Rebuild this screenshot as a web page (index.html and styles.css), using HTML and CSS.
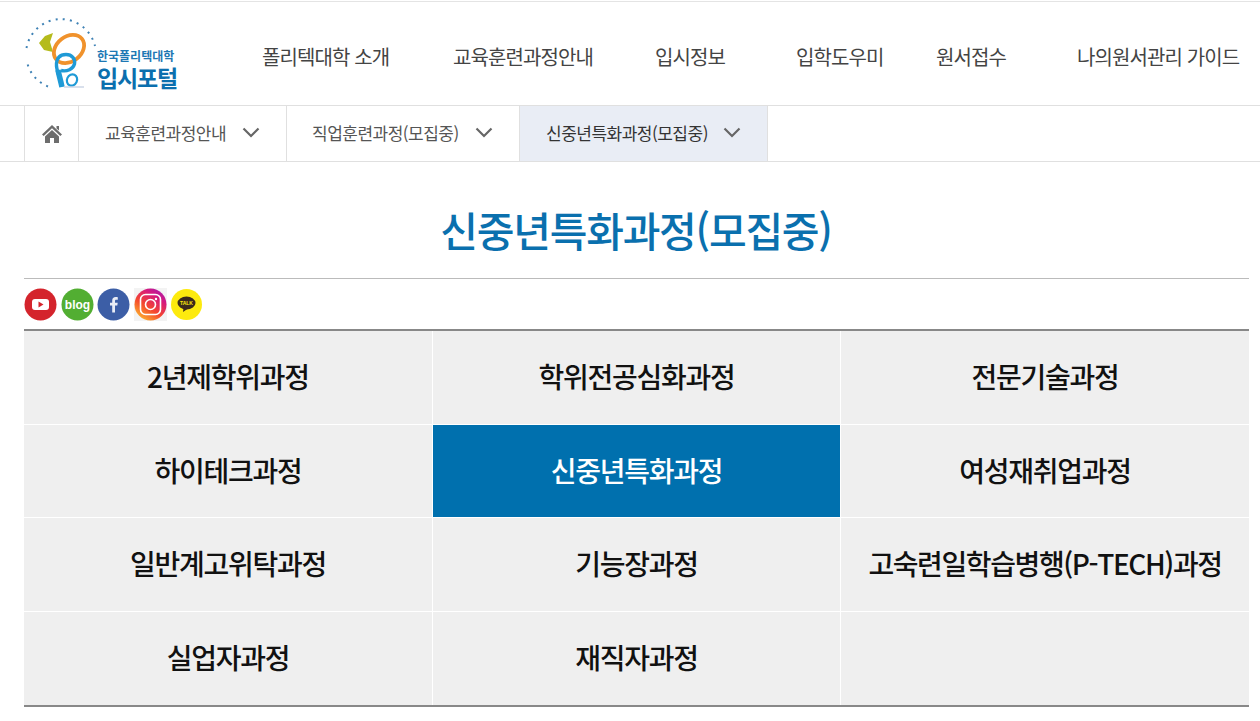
FILE: index.html
```html
<!DOCTYPE html>
<html lang="ko">
<head>
<meta charset="utf-8">
<title>신중년특화과정(모집중)</title>
<link rel="stylesheet" href="styles.css">
</head>
<body>
<header class="header">
  <a class="logo" href="#">
    <svg class="logo-mark" width="78" height="80" viewBox="24 12 78 80" aria-hidden="true">
      <g fill="none" stroke="#3f82b5" stroke-width="2" stroke-dasharray="2 5.200">
        <path d="M48 86.500A35 35 0 0 1 27 62"/>
        <path d="M26.500 48A35 35 0 0 1 95 46"/>
      </g>
      <path d="M53 33L45 36L39 43L44 50L53 52L50 42Z" fill="#b5bb1c"/>
      <ellipse cx="69" cy="49" rx="16.500" ry="12.500" transform="rotate(-38 69 49)" fill="none" stroke="#f0922c" stroke-width="3.800"/>
      <path d="M62 86C60 78 57 72 56.500 66C56 58 60 54.500 66 54.500C72 54.500 75.500 59 74.500 64C73 69 67 72 61 70.500" fill="none" stroke="#1f9ad6" stroke-width="3.400"/>
      <path d="M62 87C60.500 80 59 75 58 70" fill="none" stroke="#1f9ad6" stroke-width="5.500"/>
      <ellipse cx="72" cy="80" rx="5" ry="5.800" transform="rotate(25 72 80)" fill="none" stroke="#1f9ad6" stroke-width="2.200"/>
      <path d="M64 87H84" stroke="#c9d3e4" stroke-width="1.400"/>
    </svg>
    <span class="logo-text">
      <span class="logo-small">한국폴리텍대학</span>
      <span class="logo-big">입시포털</span>
    </span>
  </a>
  <nav class="gnb">
    <a href="#">폴리텍대학 소개</a>
    <a href="#">교육훈련과정안내</a>
    <a href="#">입시정보</a>
    <a href="#">입학도우미</a>
    <a href="#">원서접수</a>
    <a href="#">나의원서관리 가이드</a>
  </nav>
</header>

<div class="crumbs">
  <a class="crumb crumb-home" href="#" aria-label="홈">
    <svg width="22" height="20" viewBox="0 0 22 20" aria-hidden="true">
      <path d="M11 1 L21 10.500 L19.300 12 L11 4.300 L2.700 12 L1 10.500Z" fill="#6d6d6d"/>
      <path d="M15.500 2H18V6.500L15.500 4.500Z" fill="#6d6d6d"/>
      <path d="M11 6 L18 12.500V19H13V14H9V19H4V12.500Z" fill="#6d6d6d"/>
    </svg>
  </a>
  <a class="crumb crumb-first" href="#">교육훈련과정안내
    <svg class="chev" width="18" height="11" viewBox="0 0 18 11" aria-hidden="true"><path d="M1.500 1.500 L9 9 L16.500 1.500"/></svg>
  </a>
  <a class="crumb crumb-second" href="#">직업훈련과정(모집중)
    <svg class="chev" width="18" height="11" viewBox="0 0 18 11" aria-hidden="true"><path d="M1.500 1.500 L9 9 L16.500 1.500"/></svg>
  </a>
  <a class="crumb crumb-current" href="#">신중년특화과정(모집중)
    <svg class="chev" width="18" height="11" viewBox="0 0 18 11" aria-hidden="true"><path d="M1.500 1.500 L9 9 L16.500 1.500"/></svg>
  </a>
</div>

<main class="content">
  <h1 class="title">신중년특화과정(모집중)</h1>
  <div class="sns">
    <svg viewBox="0 0 33 33" aria-label="youtube"><circle cx="16.500" cy="16.500" r="16" fill="#d4242c"/><rect x="8" y="11" width="17" height="11" rx="3" fill="#fff"/><path d="M14.500 13.500 L19.500 16.500 L14.500 19.500Z" fill="#d4242c"/></svg>
    <svg viewBox="0 0 33 33" aria-label="blog"><circle cx="16.500" cy="16.500" r="16" fill="#52ae32"/><text x="16.500" y="20.500" class="blog-text">blog</text></svg>
    <svg viewBox="0 0 33 33" aria-label="facebook"><circle cx="16.500" cy="16.500" r="16" fill="#3c5ea6"/><path d="M18 24.500V17.500H20.300L20.700 14.800H18V13.100C18 12.200 18.400 11.800 19.300 11.800H20.800V9.300C20.300 9.200 19.500 9.100 18.700 9.100C16.500 9.100 15.200 10.400 15.200 12.700V14.800H13V17.500H15.200V24.500Z" fill="#e9edf6"/></svg>
    <svg viewBox="0 0 33 33" aria-label="instagram">
      <defs><linearGradient id="ig" x1="0.150" y1="1" x2="0.850" y2="0"><stop offset="0" stop-color="#fdc02f"/><stop offset="0.400" stop-color="#f5492c"/><stop offset="0.750" stop-color="#d5197f"/><stop offset="1" stop-color="#a51cb0"/></linearGradient></defs>
      <rect width="33" height="33" fill="#f3f3f3"/>
      <circle cx="16.500" cy="16.500" r="16" fill="url(#ig)"/>
      <rect x="6.500" y="6.500" width="20" height="20" rx="5" fill="none" stroke="#fff" stroke-width="1.600"/>
      <circle cx="16.500" cy="16.500" r="5" fill="none" stroke="#fff" stroke-width="1.600"/>
      <circle cx="22" cy="11" r="1.200" fill="#fff"/>
    </svg>
    <svg viewBox="0 0 33 33" aria-label="kakao talk"><circle cx="16.500" cy="16.500" r="15.500" fill="#fdea0e"/><ellipse cx="16.500" cy="15" rx="9" ry="6.500" fill="#3b2a1c"/><path d="M13.500 19.500 L13 24 L18 20.500Z" fill="#3b2a1c"/><text x="16.500" y="16.500" class="talk-text">TALK</text></svg>
  </div>
  <ul class="courses">
    <li><a href="#">2년제학위과정</a></li>
    <li><a href="#">학위전공심화과정</a></li>
    <li><a href="#">전문기술과정</a></li>
    <li><a href="#">하이테크과정</a></li>
    <li class="is-on"><a href="#">신중년특화과정</a></li>
    <li><a href="#">여성재취업과정</a></li>
    <li><a href="#">일반계고위탁과정</a></li>
    <li><a href="#">기능장과정</a></li>
    <li class="is-long"><a href="#">고숙련일학습병행(P-TECH)과정</a></li>
    <li><a href="#">실업자과정</a></li>
    <li><a href="#">재직자과정</a></li>
    <li></li>
  </ul>
</main>
</body>
</html>
```
FILE: styles.css
```css
* { box-sizing: border-box; }
html, body { margin: 0; padding: 0; background: #fff; overflow: hidden; }
body { font-family: "Noto Sans CJK KR", "Noto Sans", sans-serif; color: #333; }
a { color: inherit; text-decoration: none; }

.header {
  height: 105px;
  margin-top: 1px;
  border-top: 1px solid #e4e4e4;
  border-bottom: 1px solid #e0e0e0;
  display: flex;
  align-items: stretch;
  padding-left: 24px;
}
.logo { width: 238px; display: flex; align-items: flex-start; flex: none; padding-top: 10px; }
.logo-mark { flex: none; }
.logo-text { display: flex; flex-direction: column; margin: 36px 0 0 -5px; color: #0b6fae; white-space: nowrap; }
.logo-small { font-size: 12px; line-height: 15px; font-weight: 700; letter-spacing: 0; color: #1d78b4; }
.logo-big { font-size: 23px; line-height: 26px; font-weight: 700; letter-spacing: -1.200px; margin-top: 1px; }

.gnb {
  flex: 1;
  display: grid;
  grid-template-columns: 191px 202px 141px 140px 141px auto;
  align-items: center;
  font-size: 20px;
  letter-spacing: -0.900px;
  color: #444;
  white-space: nowrap;
  padding-top: 6px;
}

.crumbs {
  height: 56px;
  border-bottom: 1px solid #e0e0e0;
  padding-left: 24px;
  display: flex;
  font-size: 17px;
  letter-spacing: -0.500px;
  color: #555;
  white-space: nowrap;
}
.crumb {
  display: flex;
  align-items: center;
  border-left: 1px solid #e0e0e0;
  padding-bottom: 2px;
}
.crumb-home { width: 54px; justify-content: center; padding-bottom: 0; }
.crumb-first { width: 208px; padding-left: 26px; gap: 16px; }
.crumb-second { width: 233px; padding-left: 25px; gap: 16px; }
.crumb-current {
  width: 249px;
  padding-left: 26px;
  gap: 15px;
  background: #e9edf5;
  color: #333;
  border-right: 1px solid #e0e0e0;
}
.chev { fill: none; stroke: #666; stroke-width: 2.200; flex: none; }

.content { padding: 0 11px 0 24px; }
.title {
  margin: 0;
  height: 117px;
  border-bottom: 1px solid #bbb;
  padding-top: 37px;
  text-align: center;
  font-size: 41px;
  line-height: 60px;
  font-weight: 500;
  letter-spacing: -1.250px;
  color: #0a70ae;
  padding-right: 1px;
}
.sns { height: 50px; padding-top: 9px; display: flex; gap: 3.500px; align-items: flex-start; }
.sns svg { display: block; flex: none; width: 33px; height: 33px; }
.blog-text { font: 700 12px "Liberation Sans", sans-serif; fill: #fff; text-anchor: middle; }
.talk-text { font: 700 5px "Liberation Sans", sans-serif; fill: #fdea0e; text-anchor: middle; }

.courses {
  list-style: none;
  margin: 0;
  padding: 0;
  display: grid;
  grid-template-columns: 409px 408px 408px;
  grid-template-rows: 94px 93px 94px 93px;
  border-top: 2px solid #888;
  border-bottom: 2px solid #888;
  background: #efefef;
}
.courses li {
  display: flex;
  align-items: center;
  justify-content: center;
  border-right: 1px solid #fff;
  border-bottom: 1px solid #fff;
  font-size: 28px;
  font-weight: 500;
  letter-spacing: -1.250px;
  color: #111;
  white-space: nowrap;
  padding-bottom: 3px;
}
.courses li:nth-child(3n) { border-right: 0; }
.courses li:nth-last-child(-n+3) { border-bottom: 0; }
.courses .is-long { letter-spacing: -1.400px; }
.courses .is-on { background: #0070ae; color: #fff; }
```
